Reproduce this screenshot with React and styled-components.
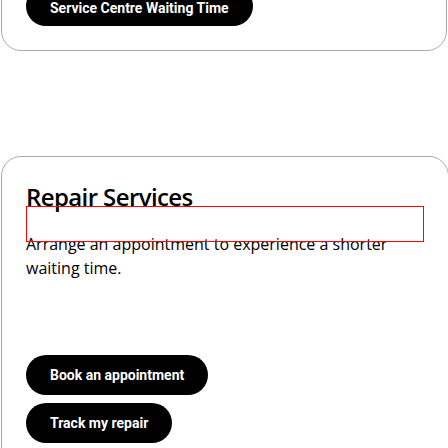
import React from 'react'
import styled, { createGlobalStyle } from 'styled-components'

const GlobalStyle = createGlobalStyle`
	html, body {
		margin: 0;
		padding: 0;
		background: #fff;
		overflow: hidden;
	}
	body {
		font-family: "Open Sans", "Noto Sans", sans-serif;
		color: #000;
	}
`

// 整页
const Page = styled.div`
	display: flex;
	flex-direction: column;
	align-items: flex-start;
	padding-left: 1px;
	margin-top: -39px;
`

// 卡片
const Card = styled.section`
	box-sizing: border-box;
	width: ${p => p.$width}px;
	border: 1px solid #ababab;
	border-radius: 20px;
	padding: 24px;
	display: flex;
	flex-direction: column;
	align-items: flex-start;
`

const Gap = styled.div`
	height: 105px;
`

// 黑色胶囊按钮
const PillButton = styled.button`
	box-sizing: border-box;
	height: 40px;
	padding: ${p => p.$nudge || 0}px 24px 0;
	border: none;
	border-radius: 20px;
	background: #000;
	color: #fff;
	font-family: Roboto, "Liberation Sans", sans-serif;
	font-weight: 700;
	font-size: 14px;
	white-space: nowrap;
	cursor: pointer;
`

const Title = styled.h2`
	margin: 0;
	font-size: 24px;
	line-height: 32px;
	font-weight: 600;
	letter-spacing: -0.6px;
`

// 调试用的红框
const Outline = styled.div`
	position: relative;
	box-sizing: border-box;
	align-self: stretch;
	height: 36px;
	margin: -7px 0 -10px;
	border: 1px solid #ff0000;
`

const Text = styled.p`
	margin: 0;
	font-size: 16px;
	line-height: 24px;
	font-weight: 400;
	color: #000;
`

const Actions = styled.div`
	display: flex;
	flex-direction: column;
	align-items: flex-start;
	gap: 8px;
	margin-top: 75px;
`

export default function App() {
	return (
		<>
			<GlobalStyle />
			<Page>
				<Card $width={446}>
					<PillButton $nudge={4}>Service Centre Waiting Time</PillButton>
				</Card>
				<Gap />
				<Card $width={448}>
					<Title>Repair Services</Title>
					<Outline />
					<Text>Arrange an appointment to experience a shorter waiting time.</Text>
					<Actions>
						<PillButton>Book an appointment</PillButton>
						<PillButton>Track my repair</PillButton>
					</Actions>
				</Card>
			</Page>
		</>
	)
}
